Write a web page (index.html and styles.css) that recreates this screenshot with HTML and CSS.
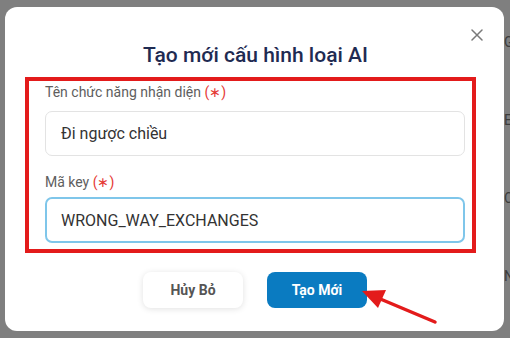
FILE: index.html
```html
<!DOCTYPE html>
<html lang="vi">
<head>
<meta charset="utf-8">
<link rel="stylesheet" href="styles.css">
</head>
<body>
<div class="page">
  <div class="page-col">
    <div class="bg-row r1">GPS</div>
    <div class="bg-row r2">Edit</div>
    <div class="bg-row r3">Cam</div>
    <div class="bg-row r4">New</div>
  </div>
</div>
<div class="modal">
  <button class="close" aria-label="Đóng">
    <svg width="12" height="12" viewBox="0 0 12 12"><path d="M1 1L11 11M11 1L1 11" stroke="#7a7a7a" stroke-width="1.5" fill="none" stroke-linecap="round"/></svg>
  </button>
  <h1 class="title">Tạo mới cấu hình loại AI</h1>
  <div class="annot">
    <label class="label l1">Tên chức năng nhận diện <span class="req">(∗)</span></label>
    <div class="input">Đi ngược chiều</div>
    <label class="label l2">Mã key <span class="req">(∗)</span></label>
    <div class="input focus">WRONG_WAY_EXCHANGES</div>
  </div>
  <div class="actions">
    <button class="btn cancel">Hủy Bỏ</button>
    <button class="btn primary">Tạo Mới</button>
  </div>
</div>
<svg class="arrow" width="510" height="338" viewBox="0 0 510 338">
  <line x1="435" y1="322" x2="378" y2="298" stroke="#e31b1b" stroke-width="3.5" stroke-linecap="round"/>
  <polygon points="362,291 386,290 378,308" fill="#e31b1b"/>
</svg>
</body>
</html>
```
FILE: styles.css
```css
* { box-sizing: border-box; }
html, body { margin: 0; padding: 0; }
body {
  width: 510px;
  height: 338px;
  overflow: hidden;
  background: #7f7f7f;
  font-family: Roboto, "Noto Sans", sans-serif;
  position: relative;
}
.page { height: 338px; padding-left: 504px; }
.page-col { display: flex; flex-direction: column; }
.bg-row {
  color: #3c3c3c;
  font-size: 14px;
  line-height: 16px;
  white-space: nowrap;
}
.r1 { margin-top: 34px; }
.r2 { margin-top: 62px; }
.r3 { margin-top: 62px; }
.r4 { margin-top: 62px; }

.modal {
  position: absolute;
  left: 5px;
  top: 7px;
  width: 499px;
  height: 324px;
  background: #fff;
  border-radius: 12px;
  padding-top: 33px;
  display: flex;
  flex-direction: column;
}
.close {
  position: absolute;
  right: 21px;
  top: 22px;
  width: 12px;
  height: 12px;
  padding: 0;
  border: 0;
  background: none;
  display: flex;
}
.title {
  margin: 0;
  text-align: center;
  font-size: 21px;
  line-height: 30px;
  font-weight: 500;
  color: #1f2b52;
  padding-left: 2px;
}
.annot {
  margin: 7px 0 0 20px;
  width: 451px;
  border: 4px solid #e31b1b;
  padding: 1px 7px 6px 16px;
  display: flex;
  flex-direction: column;
}
.label {
  font-size: 14px;
  line-height: 20px;
  color: #5e5e5e;
}
.req { color: #e53935; }
.l1 { margin-bottom: 9px; }
.l2 { margin-top: 16px; margin-bottom: 5px; }
.input {
  height: 45px;
  border: 1px solid #e3e3e3;
  border-radius: 7px;
  padding-left: 15px;
  display: flex;
  align-items: center;
  font-size: 16px;
  color: #333;
}
.input.focus {
  height: 46px;
  border: 2px solid #7fc6ea;
  padding-left: 14px;
}
.actions {
  margin-top: 19px;
  display: flex;
  justify-content: center;
  gap: 24px;
  padding-left: 1px;
}
.btn {
  width: 100px;
  height: 36px;
  border: 0;
  border-radius: 8px;
  font-family: Roboto, "Noto Sans", sans-serif;
  font-size: 14px;
  font-weight: 700;
}
.cancel {
  background: #fff;
  color: #555;
  box-shadow: 0 1px 6px rgba(0,0,0,0.12);
}
.primary {
  background: #0a7bc1;
  color: #fff;
}
.arrow {
  position: absolute;
  left: 0;
  top: 0;
  pointer-events: none;
}
```
